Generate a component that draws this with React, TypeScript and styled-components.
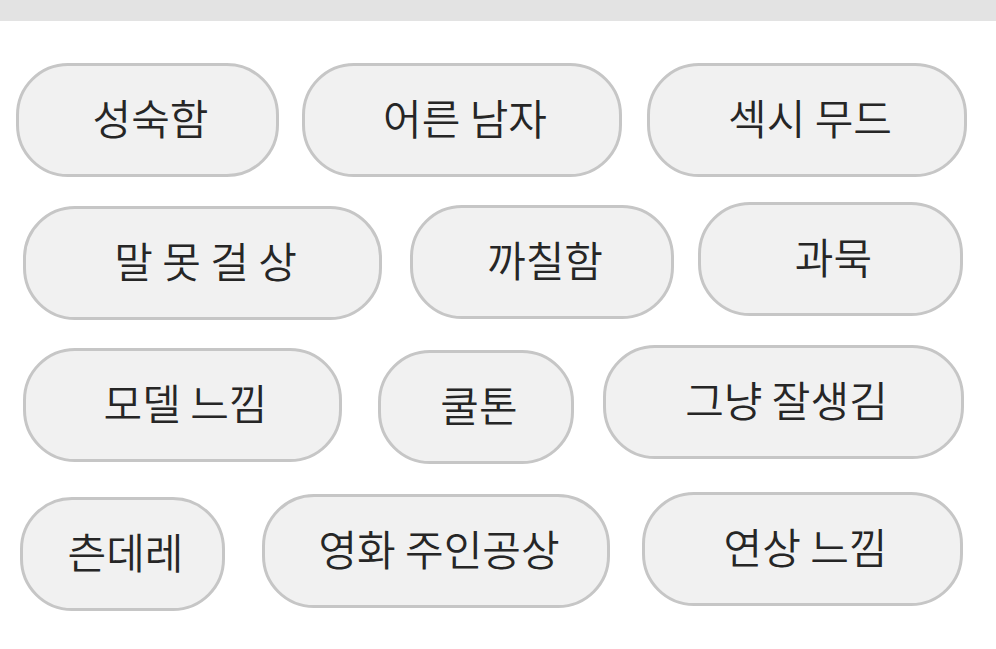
import * as React from 'react';
import styled, { createGlobalStyle } from 'styled-components';

const GlobalStyle = createGlobalStyle`
  html, body {
    margin: 0;
    padding: 0;
    background: #ffffff;
  }
  body {
    font-family: 'Noto Sans CJK KR', 'Noto Sans', sans-serif;
  }
`;

const Page = styled.div`
  width: 996px;
  height: 649px;
  overflow: hidden;
  display: flex;
  flex-direction: column;
`;

const TopBar = styled.div`
  height: 21px;
  background: #e3e3e3;
  flex-shrink: 0;
`;

const TagList = styled.div`
  display: flex;
  flex-direction: column;
`;

const TagRow = styled.div<{ $top: number }>`
  display: flex;
  align-items: flex-start;
  margin-top: ${(p) => p.$top}px;
  height: 118px;
`;

const Tag = styled.div<{ $width: number; $left: number; $dy: number }>`
  box-sizing: border-box;
  width: ${(p) => p.$width}px;
  height: 114px;
  margin-left: ${(p) => p.$left}px;
  margin-top: ${(p) => p.$dy}px;
  flex-shrink: 0;
  display: flex;
  align-items: center;
  justify-content: center;
  padding: 0 0 6px 6px;
  background: #f1f1f1;
  border: 3px solid #c6c6c6;
  border-radius: 52px;
  color: #262626;
  font-size: 42px;
  font-weight: 350;
  white-space: nowrap;
  line-height: 1;
`;

type TagData = { label: string; width: number; left: number; dy: number };

const rows: { top: number; tags: TagData[] }[] = [
  {
    top: 42,
    tags: [
      { label: '성숙함', width: 263, left: 16, dy: 0 },
      { label: '어른 남자', width: 320, left: 23, dy: 0 },
      { label: '섹시 무드', width: 320, left: 25, dy: 0 },
    ],
  },
  {
    top: 21,
    tags: [
      { label: '말 못 걸 상', width: 359, left: 23, dy: 4 },
      { label: '까칠함', width: 264, left: 28, dy: 3 },
      { label: '과묵', width: 265, left: 24, dy: 0 },
    ],
  },
  {
    top: 25,
    tags: [
      { label: '모델 느낌', width: 319, left: 23, dy: 3 },
      { label: '쿨톤', width: 196, left: 36, dy: 5 },
      { label: '그냥 잘생김', width: 361, left: 29, dy: 0 },
    ],
  },
  {
    top: 29,
    tags: [
      { label: '츤데레', width: 205, left: 20, dy: 5 },
      { label: '영화 주인공상', width: 348, left: 37, dy: 2 },
      { label: '연상 느낌', width: 321, left: 32, dy: 0 },
    ],
  },
];

export default function App() {
  return (
    <Page>
      <GlobalStyle />
      <TopBar />
      <TagList>
        {rows.map((row, i) => (
          <TagRow key={i} $top={row.top}>
            {row.tags.map((t) => (
              <Tag key={t.label} $width={t.width} $left={t.left} $dy={t.dy}>
                {t.label}
              </Tag>
            ))}
          </TagRow>
        ))}
      </TagList>
    </Page>
  );
}
